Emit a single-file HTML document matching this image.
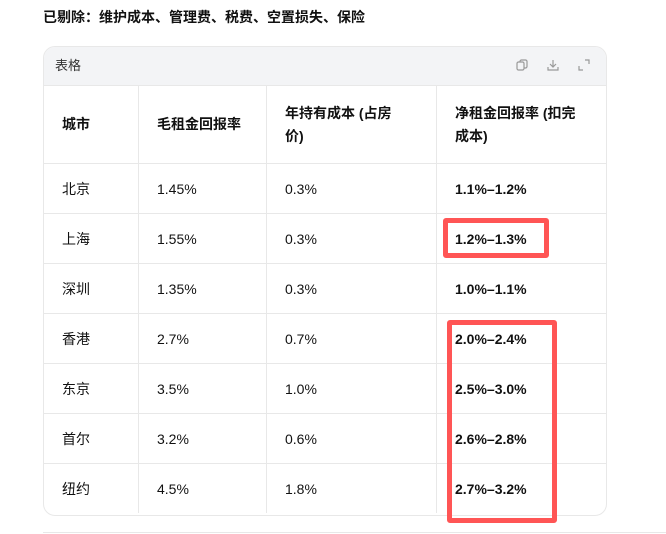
<!DOCTYPE html>
<html><head><meta charset="utf-8"><style>
body{margin:0;width:666px;height:534px;background:#fff;font-family:"Liberation Sans","Noto Sans CJK SC",sans-serif;color:#111;position:relative;overflow:hidden}
.t{position:absolute;left:43px;top:7px;font-size:14px;font-weight:bold}
.card{position:absolute;left:43px;top:46px;width:562px;height:468px;border:1px solid #e8e8e8;border-radius:12px;overflow:hidden}
.hd{height:38px;background:#f3f4f6;border-bottom:1px solid #e8e8e8;font-size:13px;color:#333;line-height:38px;padding-left:11px;position:relative}
.ic{position:absolute;top:12px;width:12px;height:12px;color:#999}
table{border-collapse:collapse;font-size:14px;width:562px}
td{border-right:1px solid #e8e8e8;border-bottom:1px solid #e8e8e8;padding:0 0 0 18px;height:49px;vertical-align:middle}
td:last-child{border-right:none}
tr:first-child td{height:77px;font-weight:bold;line-height:23px}
td:nth-child(4){font-weight:bold}
.r{position:absolute;border:5px solid #f55;border-radius:3px}
.bl{position:absolute;left:43px;right:0;top:532px;border-top:1px solid #e8e8e8}
</style></head><body>
<div class="t">已剔除：维护成本、管理费、税费、空置损失、保险</div>
<div class="card">
<div class="hd">表格
<svg class="ic" style="left:472px" viewBox="0 0 12 12" fill="none" stroke="#999" stroke-width="1.2"><rect x="1" y="3" width="7" height="8" rx="1.5"/><path d="M4 3V2.5A1.5 1.5 0 0 1 5.5 1H9.5A1.5 1.5 0 0 1 11 2.5V7.5A1.5 1.5 0 0 1 9.5 9H8"/></svg>
<svg class="ic" style="left:503px" viewBox="0 0 12 12" fill="none" stroke="#999" stroke-width="1.2"><path d="M6 1v7M3 5l3 3 3-3M1 8v3h10V8"/></svg>
<svg class="ic" style="left:534px" viewBox="0 0 12 12" fill="none" stroke="#999" stroke-width="1.2"><path d="M7 1h4v4M5 11H1V7"/></svg>
</div>
<table>
<tr><td style="width:76px">城市</td><td style="width:109px">毛租金回报率</td><td style="width:151px">年持有成本 (占房<br>价)</td><td>净租金回报率 (扣完<br>成本)</td></tr>
<tr><td>北京</td><td>1.45%</td><td>0.3%</td><td>1.1%–1.2%</td></tr>
<tr><td>上海</td><td>1.55%</td><td>0.3%</td><td>1.2%–1.3%</td></tr>
<tr><td>深圳</td><td>1.35%</td><td>0.3%</td><td>1.0%–1.1%</td></tr>
<tr><td>香港</td><td>2.7%</td><td>0.7%</td><td>2.0%–2.4%</td></tr>
<tr><td>东京</td><td>3.5%</td><td>1.0%</td><td>2.5%–3.0%</td></tr>
<tr><td>首尔</td><td>3.2%</td><td>0.6%</td><td>2.6%–2.8%</td></tr>
<tr><td style="border-bottom:none">纽约</td><td style="border-bottom:none">4.5%</td><td style="border-bottom:none">1.8%</td><td style="border-bottom:none">2.7%–3.2%</td></tr>
</table>
</div>
<div class="r" style="left:443px;top:218px;width:96px;height:30px"></div>
<div class="r" style="left:447px;top:320px;width:100px;height:193px"></div>
<div class="bl"></div>
</body></html>
